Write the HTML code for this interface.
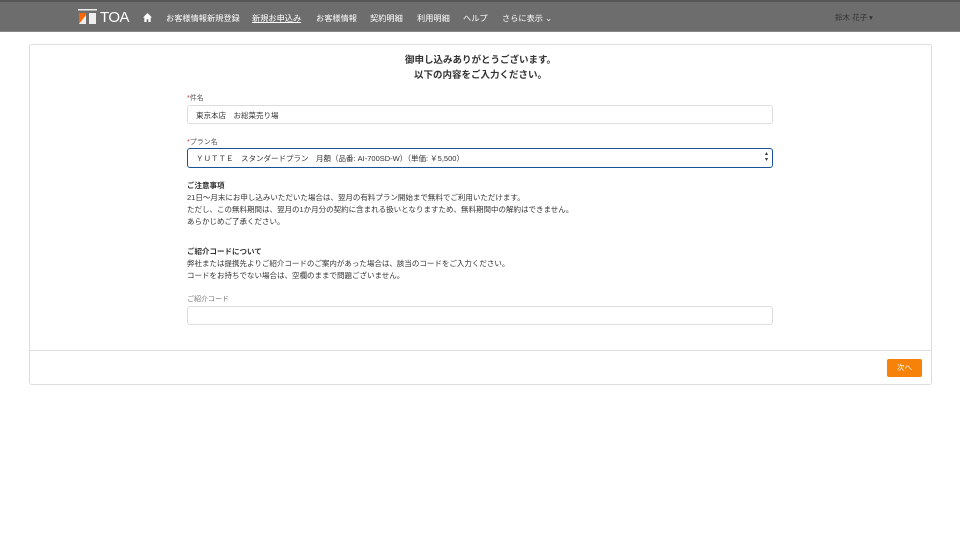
<!DOCTYPE html>
<html><head><meta charset="utf-8"><style>
*{box-sizing:border-box;margin:0;padding:0}
body{width:960px;height:536px;background:#fff;font-family:"Liberation Sans","Noto Sans CJK JP",sans-serif;color:#222;overflow:hidden;position:relative}
.hdr{position:absolute;left:0;top:0;width:960px;height:32px;background:#6d6d6d;border-top:2px solid #555;border-bottom:1px solid #888}
.nav{position:absolute;top:10px;font-size:8.2px;color:#fff;white-space:nowrap}
.card{position:absolute;left:29px;top:44px;width:903px;height:341px;border:1px solid #ddd;border-radius:3px}
.t{position:absolute;font-size:7.5px;color:#333;white-space:nowrap}
.inp{position:absolute;left:187px;width:586px;height:19px;border:1px solid #ddd;border-radius:3px;font-size:7.5px;padding:4px 8px;color:#333}
</style></head><body>
<div class="hdr">
 <svg style="position:absolute;left:78px;top:7px" width="20" height="16" viewBox="0 0 20 16"><rect x="0" y="0" width="19" height="1.5" fill="#eee"/><rect x="1" y="4" width="7" height="11" fill="#f60"/><polygon points="1,15 8,6 8,15" fill="#eee"/><rect x="11" y="4" width="7" height="11" fill="#eee"/></svg>
 <div class="nav" style="left:100px;top:7px;font-size:15px;font-weight:300;letter-spacing:-0.5px">TOA</div>
 <svg style="position:absolute;left:143px;top:11px" width="9" height="9" viewBox="0 0 10 10"><path d="M5 0L0 5h1.5v5h2.5V7h2v3h2.5V5H10z" fill="#fff"/></svg>
 <div class="nav" style="left:166px">お客様情報新規登録</div>
 <div class="nav" style="left:252px;text-decoration:underline">新規お申込み</div>
 <div class="nav" style="left:316px">お客様情報</div>
 <div class="nav" style="left:370px">契約明細</div>
 <div class="nav" style="left:417px">利用明細</div>
 <div class="nav" style="left:463px">ヘルプ</div>
 <div class="nav" style="left:502px">さらに表示 ⌄</div>
 <div class="nav" style="left:835px;color:#333;font-size:7.5px">鈴木 花子 ▾</div>
</div>
<div class="card">
 <div style="position:absolute;left:0;right:0;top:8px;text-align:center;font-size:9.5px;font-weight:bold;line-height:15px;color:#333">御申し込みありがとうございます。<br>以下の内容をご入力ください。</div>
 <div style="position:absolute;left:0;right:0;top:305px;border-top:1px solid #ddd"></div>
 <div style="position:absolute;left:857px;top:314px;width:35px;height:18px;background:#f7820a;border-radius:2px;color:#fff;font-size:7.5px;text-align:center;line-height:18px">次へ</div>
</div>
<div class="t" style="left:187px;top:93px;font-size:7px;color:#555"><span style="color:#c23934">*</span>件名</div>
<div class="inp" style="top:105px">東京本店　お総菜売り場</div>
<div class="t" style="left:187px;top:137px;font-size:7px;color:#555"><span style="color:#c23934">*</span>プラン名</div>
<div class="inp" style="top:148px;border:1.5px solid #1b5297;height:20px">ＹＵＴＴＥ　スタンダードプラン　月額（品番: AI-700SD-W）（単価: ￥5,500）<span style="position:absolute;right:4px;top:2px;font-size:6px;line-height:6px">▴<br>▾</span></div>
<div class="t" style="left:187px;top:180px;line-height:12px">
<b>ご注意事項</b><br>21日～月末にお申し込みいただいた場合は、翌月の有料プラン開始まで無料でご利用いただけます。<br>ただし、この無料期間は、翌月の1か月分の契約に含まれる扱いとなりますため、無料期間中の解約はできません。<br>あらかじめご了承ください。</div>
<div class="t" style="left:187px;top:246px;line-height:12px">
<b>ご紹介コードについて</b><br>弊社または提携先よりご紹介コードのご案内があった場合は、該当のコードをご入力ください。<br>コードをお持ちでない場合は、空欄のままで問題ございません。</div>
<div class="t" style="left:187px;top:294px;font-size:7px;color:#777">ご紹介コード</div>
<div class="inp" style="top:306px"></div>
</body></html>
